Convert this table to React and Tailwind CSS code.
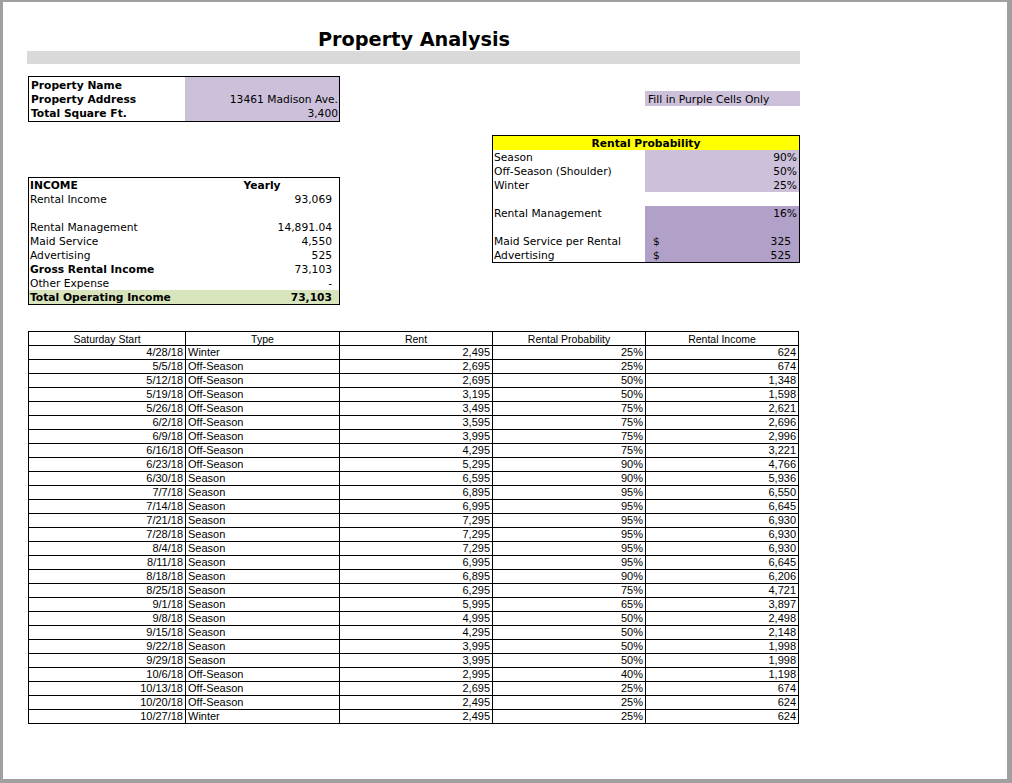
const PROPERTY = [
  { label: 'Property Name', value: '' },
  { label: 'Property Address', value: '13461 Madison Ave.' },
  { label: 'Total Square Ft.', value: '3,400' },
];

const INCOME = [
  { label: 'INCOME', value: 'Yearly', head: true },
  { label: 'Rental Income', value: '93,069' },
  { label: '', value: '' },
  { label: 'Rental Management', value: '14,891.04' },
  { label: 'Maid Service', value: '4,550' },
  { label: 'Advertising', value: '525' },
  { label: 'Gross Rental Income', value: '73,103', bold: true },
  { label: 'Other Expense', value: '-' },
  { label: 'Total Operating Income', value: '73,103', total: true },
];

// fill: 'light' | 'dark' | null
const PROB = [
  { label: 'Season', value: '90%', fill: 'light' },
  { label: 'Off-Season (Shoulder)', value: '50%', fill: 'light' },
  { label: 'Winter', value: '25%', fill: 'light' },
  { label: '', value: '', fill: null },
  { label: 'Rental Management', value: '16%', fill: 'dark' },
  { label: '', value: '', fill: 'dark' },
  { label: 'Maid Service per Rental', value: '325', fill: 'dark', dollar: true },
  { label: 'Advertising', value: '525', fill: 'dark', dollar: true },
];

const WEEKS = [
  ['4/28/18', 'Winter', '2,495', '25%', '624'],
  ['5/5/18', 'Off-Season', '2,695', '25%', '674'],
  ['5/12/18', 'Off-Season', '2,695', '50%', '1,348'],
  ['5/19/18', 'Off-Season', '3,195', '50%', '1,598'],
  ['5/26/18', 'Off-Season', '3,495', '75%', '2,621'],
  ['6/2/18', 'Off-Season', '3,595', '75%', '2,696'],
  ['6/9/18', 'Off-Season', '3,995', '75%', '2,996'],
  ['6/16/18', 'Off-Season', '4,295', '75%', '3,221'],
  ['6/23/18', 'Off-Season', '5,295', '90%', '4,766'],
  ['6/30/18', 'Season', '6,595', '90%', '5,936'],
  ['7/7/18', 'Season', '6,895', '95%', '6,550'],
  ['7/14/18', 'Season', '6,995', '95%', '6,645'],
  ['7/21/18', 'Season', '7,295', '95%', '6,930'],
  ['7/28/18', 'Season', '7,295', '95%', '6,930'],
  ['8/4/18', 'Season', '7,295', '95%', '6,930'],
  ['8/11/18', 'Season', '6,995', '95%', '6,645'],
  ['8/18/18', 'Season', '6,895', '90%', '6,206'],
  ['8/25/18', 'Season', '6,295', '75%', '4,721'],
  ['9/1/18', 'Season', '5,995', '65%', '3,897'],
  ['9/8/18', 'Season', '4,995', '50%', '2,498'],
  ['9/15/18', 'Season', '4,295', '50%', '2,148'],
  ['9/22/18', 'Season', '3,995', '50%', '1,998'],
  ['9/29/18', 'Season', '3,995', '50%', '1,998'],
  ['10/6/18', 'Off-Season', '2,995', '40%', '1,198'],
  ['10/13/18', 'Off-Season', '2,695', '25%', '674'],
  ['10/20/18', 'Off-Season', '2,495', '25%', '624'],
  ['10/27/18', 'Winter', '2,495', '25%', '624'],
];

const HEADERS = ['Saturday Start', 'Type', 'Rent', 'Rental Probability', 'Rental Income'];
const COL_W = ['w-[157px]', 'w-[154px]', 'w-[153px]', 'w-[153px]', 'w-[153px]'];

function PropertyBox() {
  return (
    <div className="w-[312px] border border-black flex">
      <div className="w-[156px] py-px">
        {PROPERTY.map((r) => (
          <div key={r.label} className="h-[14px] leading-[13px] pt-px pl-[2px] font-bold">{r.label}</div>
        ))}
      </div>
      <div className="flex-1 bg-[#ccc0da] py-px">
        {PROPERTY.map((r) => (
          <div key={r.label} className="h-[14px] leading-[13px] pt-px pr-px text-right">{r.value}</div>
        ))}
      </div>
    </div>
  );
}

function IncomeBox() {
  return (
    <div className="w-[312px] border border-black mt-[55px]">
      {INCOME.map((r, i) => (
        <div key={i} className={`flex h-[14px] leading-[13px] pt-px ${r.total ? 'bg-[#d8e4bc] font-bold' : ''}`}>
          <div className={`w-[156px] pl-px ${r.head || r.bold ? 'font-bold' : ''}`}>{r.label}</div>
          <div className={`flex-1 ${r.head ? 'text-center font-bold' : 'text-right pr-[7px]'}`}>{r.value}</div>
        </div>
      ))}
    </div>
  );
}

function ProbabilityBox() {
  return (
    <div className="w-[308px] border border-black mt-[29px]">
      <div className="h-[14px] leading-[13px] pt-px bg-[#ffff00] text-center font-bold">Rental Probability</div>
      {PROB.map((r, i) => (
        <div key={i} className="flex h-[14px]">
          <div className="w-[152px] pl-px leading-[13px] pt-px">{r.label}</div>
          <div
            className={`flex-1 flex justify-between leading-[13px] pt-px ${
              r.fill === 'light' ? 'bg-[#ccc0da]' : r.fill === 'dark' ? 'bg-[#b1a0c7]' : ''
            } ${r.dollar ? 'pl-[8px] pr-[8px]' : 'pr-[2px]'}`}
          >
            <span>{r.dollar ? '$' : ''}</span>
            <span>{r.value}</span>
          </div>
        </div>
      ))}
    </div>
  );
}

function WeeklyTable() {
  return (
    <div className="mt-[26px] border-l border-t border-black w-[771px] font-['Liberation_Sans',Arial,sans-serif] text-[11px]">
      <div className="flex h-[14px] border-b border-black">
        {HEADERS.map((h, i) => (
          <div key={h} className={`${COL_W[i]} border-r border-black text-center text-[10.5px] leading-[13px] pt-px`}>
            {h}
          </div>
        ))}
      </div>
      {WEEKS.map((row) => (
        <div key={row[0]} className="flex h-[14px] border-b border-black">
          {row.map((cell, i) => (
            <div
              key={i}
              className={`${COL_W[i]} border-r border-black leading-[13px] ${i === 1 ? 'text-left pl-[2px]' : 'text-right pr-[2px]'}`}
            >
              {cell}
            </div>
          ))}
        </div>
      ))}
    </div>
  );
}

export default function App() {
  return (
    <div className="w-[1012px] h-[783px] bg-white border-t-2 border-l-[3px] border-r-[5px] border-b-4 border-[#a0a0a0] overflow-hidden text-black font-['DejaVu_Sans',Verdana,sans-serif] text-[10.7px]">
      <div className="pl-[25px] pt-[27px] w-[797px]">
        <h1 className="h-[22px] leading-[22px] text-center text-[19.3px] font-bold">Property Analysis</h1>
        <div className="h-[13px] bg-[#d9d9d9] -ml-px w-[773px] mb-[12px]" />

        <div className="flex justify-between">
          <div>
            <PropertyBox />
            <IncomeBox />
          </div>
          <div className="flex flex-col items-end">
            <div className="mt-[15px] w-[155px] h-[15px] leading-[15px] pt-px bg-[#ccc0da] pl-[3px]">Fill in Purple Cells Only</div>
            <ProbabilityBox />
          </div>
        </div>

        <WeeklyTable />
      </div>
    </div>
  );
}
